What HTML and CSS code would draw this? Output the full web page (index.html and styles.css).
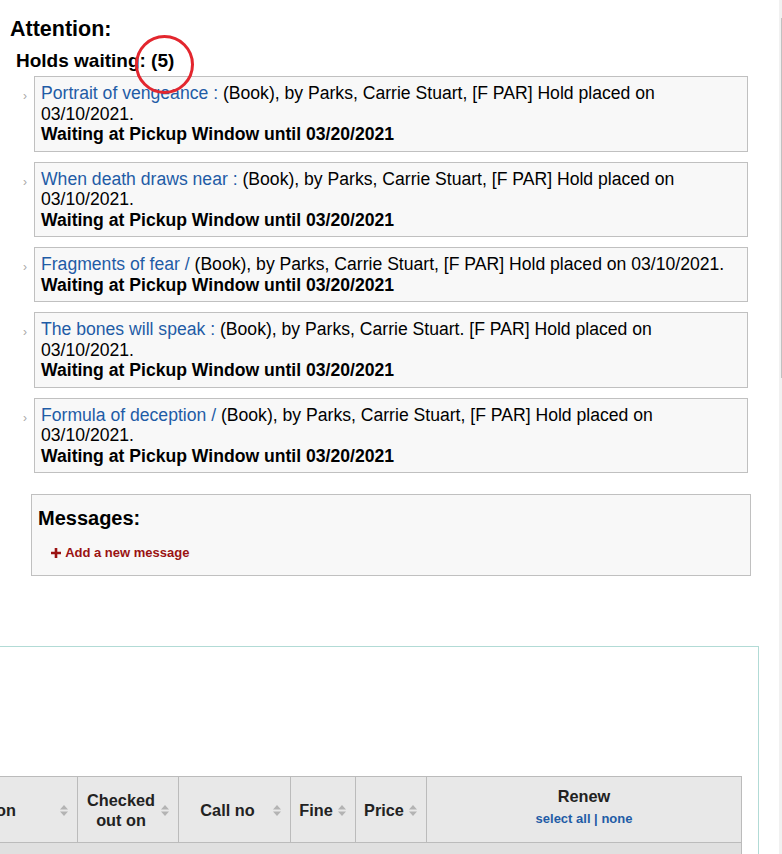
FILE: index.html
```html
<!DOCTYPE html>
<html lang="en">
  <head>
    <meta charset="UTF-8" />
    <meta name="viewport" content="width=device-width, initial-scale=1.0" />
    <title>Checkouts</title>
    <link rel="stylesheet" href="styles.css">
  </head>
  <body>
    <div class="page">
      <h3 class="attention">Attention:</h3>
      <h4 class="holds-title">Holds waiting: <span class="count">(5)</span></h4>
      <ul class="holds">
        <li>
          <div class="hold">
            <a href="#">Portrait of vengeance :</a> (Book), by Parks, Carrie Stuart, [F PAR] Hold placed on 03/10/2021.
            <strong>Waiting at Pickup Window until 03/20/2021</strong>
          </div>
        </li>
        <li>
          <div class="hold">
            <a href="#">When death draws near :</a> (Book), by Parks, Carrie Stuart, [F PAR] Hold placed on 03/10/2021.
            <strong>Waiting at Pickup Window until 03/20/2021</strong>
          </div>
        </li>
        <li>
          <div class="hold">
            <a href="#">Fragments of fear /</a> (Book), by Parks, Carrie Stuart, [F PAR] Hold placed on 03/10/2021.
            <strong>Waiting at Pickup Window until 03/20/2021</strong>
          </div>
        </li>
        <li>
          <div class="hold">
            <a href="#">The bones will speak :</a> (Book), by Parks, Carrie Stuart. [F PAR] Hold placed on 03/10/2021.
            <strong>Waiting at Pickup Window until 03/20/2021</strong>
          </div>
        </li>
        <li>
          <div class="hold">
            <a href="#">Formula of deception /</a> (Book), by Parks, Carrie Stuart, [F PAR] Hold placed on 03/10/2021.
            <strong>Waiting at Pickup Window until 03/20/2021</strong>
          </div>
        </li>
      </ul>

      <div class="messages">
        <h3>Messages:</h3>
        <a class="add-msg" href="#">
          <svg width="10" height="10" viewBox="0 0 10 10"><path d="M3.7 0h2.6v3.7H10v2.6H6.3V10H3.7V6.3H0V3.7h3.7z" fill="#9a1212"/></svg>
          Add a new message
        </a>
      </div>

      <div class="checkouts">
        <table class="issues">
          <colgroup>
            <col style="width:177px">
            <col style="width:101px">
            <col style="width:112px">
            <col style="width:65px">
            <col style="width:71px">
            <col style="width:315px">
          </colgroup>
          <thead>
            <tr>
              <th class="sort">Location <svg class="sort-icon" width="8" height="11" viewBox="0 0 8 11"><path d="M0 4.5L4 0l4 4.5zM0 6.5h8L4 11z" fill="#b3b3b3"/></svg></th>
              <th class="sort">Checked out on <svg class="sort-icon" width="8" height="11" viewBox="0 0 8 11"><path d="M0 4.5L4 0l4 4.5zM0 6.5h8L4 11z" fill="#b3b3b3"/></svg></th>
              <th class="sort">Call no <svg class="sort-icon" width="8" height="11" viewBox="0 0 8 11"><path d="M0 4.5L4 0l4 4.5zM0 6.5h8L4 11z" fill="#b3b3b3"/></svg></th>
              <th class="sort">Fine <svg class="sort-icon" width="8" height="11" viewBox="0 0 8 11"><path d="M0 4.5L4 0l4 4.5zM0 6.5h8L4 11z" fill="#b3b3b3"/></svg></th>
              <th class="sort">Price <svg class="sort-icon" width="8" height="11" viewBox="0 0 8 11"><path d="M0 4.5L4 0l4 4.5zM0 6.5h8L4 11z" fill="#b3b3b3"/></svg></th>
              <th class="renew">
                Renew
                <div class="select"><a href="#">select all</a> | <a href="#">none</a></div>
              </th>
            </tr>
          </thead>
          <tbody>
            <tr class="group">
              <td colspan="6"></td>
            </tr>
          </tbody>
        </table>
      </div>
    </div>
    <div class="scrollbar"><div class="thumb"></div></div>
  </body>
</html>
```

FILE: styles.css
```css
* {
  margin: 0;
  padding: 0;
  box-sizing: border-box;
}
html {
  overflow: hidden;
}
body {
  font-family: "Liberation Sans", Arial, sans-serif;
  color: #000;
  background: #fff;
}
ul {
  list-style: none;
}
a {
  text-decoration: none;
}
.page {
  width: 782px;
}
.attention {
  font-size: 21.5px;
  line-height: 24px;
  margin: 17px 0 0 10px;
}
.holds-title {
  font-size: 19px;
  line-height: 22px;
  margin: 9px 0 0 16px;
}
.holds-title .count {
  position: relative;
}
.holds-title .count::after {
  content: "";
  position: absolute;
  left: -16px;
  top: -15px;
  width: 53px;
  height: 53px;
  border: 3.5px solid #e3262e;
  border-radius: 50%;
}
.holds {
  margin-top: 4px;
}
.holds li {
  display: flex;
  margin-bottom: 10px;
}
.holds li::before {
  content: "\203A";
  box-sizing: border-box;
  flex: 0 0 34px;
  padding-right: 7px;
  text-align: right;
  font-size: 12px;
  line-height: 12px;
  margin-top: 14px;
  color: #a8a8a8;
}
.hold {
  width: 714px;
  border: 1px solid #c0c0c0;
  background: #f8f8f8;
  padding: 6px 6px 6px;
  font-size: 17.6px;
  line-height: 20.5px;
}
.hold a {
  color: #1f5ca6;
}
.hold strong {
  display: block;
}
.messages {
  margin: 21px 31px 0;
  border: 1px solid #c0c0c0;
  background: #f8f8f8;
  padding: 11px 6px 13px;
}
.messages h3 {
  font-size: 20px;
  line-height: 24px;
}
.add-msg {
  display: inline-block;
  margin: 14px 0 0 13px;
  font-size: 13px;
  line-height: 18px;
  font-weight: bold;
  color: #9a1212;
}
.add-msg svg {
  margin-right: 1px;
  vertical-align: -0.5px;
}
.checkouts {
  margin: 70px 23px 0 -111px;
  border: 1px solid #b2dbd6;
  padding: 129px 16px 0 10px;
}
.issues {
  table-layout: fixed;
  width: 841px;
  border-collapse: collapse;
}
.issues th {
  position: relative;
  background: #e8e8e8;
  border: 1px solid #bbb;
  color: #222;
  font-size: 16.3px;
  line-height: 20px;
  font-weight: bold;
  padding: 12px 22px 12px 8px;
  text-align: center;
  vertical-align: middle;
  height: 66px;
}
.sort-icon {
  position: absolute;
  right: 9px;
  top: 28px;
}
.issues th.renew {
  padding: 9px 8px 0;
  vertical-align: top;
}
.renew .select {
  margin-top: 4px;
  font-size: 13px;
  line-height: 18px;
  color: #1f5ca6;
}
.renew .select a {
  color: #1f5ca6;
}
.group td {
  background: #e0e0e0;
  border: 1px solid #bbb;
  height: 40px;
}
.scrollbar {
  position: fixed;
  top: 0;
  right: 0;
  width: 3px;
  height: 100%;
  background: #f1f1f1;
}
.scrollbar .thumb {
  margin: 18px 0 0 2px;
  width: 1px;
  height: 360px;
  background: #c1c1c1;
}
```
